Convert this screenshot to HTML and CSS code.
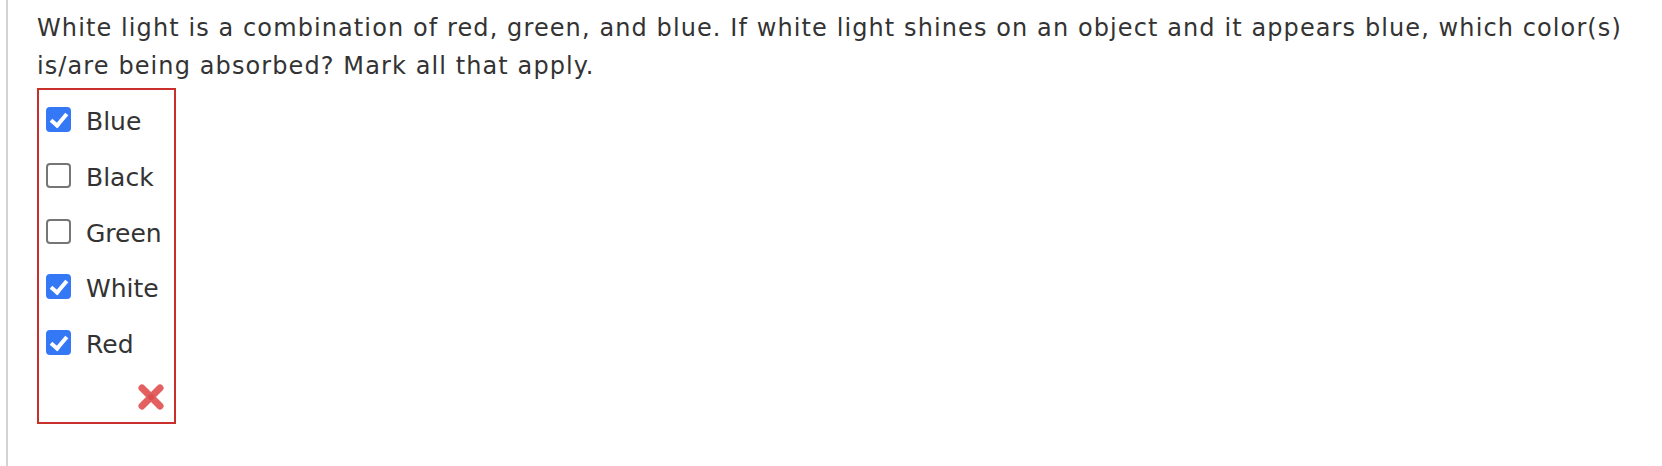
FILE: index.html
```html
<!DOCTYPE html>
<html lang="en">
<head>
    <meta charset="UTF-8">
    <meta name="viewport" content="width=device-width, initial-scale=1.0">
    <title>Question</title>
    <link rel="stylesheet" href="styles.css">
</head>
<body>
    <div class="question-wrap">
        <p class="question-text">White light is a combination of red, green, and blue. If white light shines on an object and it appears blue, which color(s) is/are being absorbed? Mark all that apply.</p>
        <div class="answer-box">
            <label class="option"><input type="checkbox" checked disabled /><span>Blue</span></label>
            <label class="option"><input type="checkbox" disabled /><span>Black</span></label>
            <label class="option"><input type="checkbox" disabled /><span>Green</span></label>
            <label class="option"><input type="checkbox" checked disabled /><span>White</span></label>
            <label class="option"><input type="checkbox" checked disabled /><span>Red</span></label>
            <div class="result-mark">
                <svg width="28" height="28" viewBox="0 0 28 28">
                    <g stroke="#e46060" stroke-width="7" stroke-linecap="round">
                        <line x1="5" y1="5" x2="23" y2="23" />
                        <line x1="23" y1="5" x2="5" y2="23" />
                    </g>
                    <circle cx="14" cy="14" r="3" fill="#d94f4f" />
                </svg>
            </div>
        </div>
    </div>
</body>
</html>
```

FILE: styles.css
```css
body {
    margin: 0;
    padding: 0;
    background-color: #fff;
    color: #333;
    font-family: "DejaVu Sans", Verdana, sans-serif;
}

.question-wrap {
    margin-left: 6px;
    min-height: 100vh;
    box-sizing: border-box;
    border-left: 2px solid #d3d3d3;
    padding: 9px 0 0 29px;
}

.question-text {
    margin: 0;
    width: 1610px;
    font-size: 24px;
    line-height: 38.4px;
    letter-spacing: 1.1px;
}

.answer-box {
    display: inline-block;
    box-sizing: border-box;
    width: 139px;
    height: 336px;
    margin-top: 2px;
    padding: 2px 0 0 7px;
    border: 2px solid #c9302c;
}

.option {
    display: flex;
    align-items: center;
    height: 55.75px;
    font-size: 25px;
}

.option span {
    margin-top: 4px;
}

.option input {
    appearance: none;
    -webkit-appearance: none;
    position: relative;
    box-sizing: border-box;
    width: 25px;
    height: 25px;
    margin: 0 15px 0 0;
    border: 2px solid #767676;
    border-radius: 4px;
    background-color: #fff;
    opacity: 1;
}

.option input:checked {
    background-color: #3478f6;
    border-color: #3478f6;
}

.option input:checked::after {
    content: "";
    position: absolute;
    left: 6px;
    top: 1px;
    width: 6px;
    height: 13px;
    border-right: 4px solid #fff;
    border-bottom: 4px solid #fff;
    transform: rotate(40deg);
}

.result-mark {
    display: flex;
    justify-content: flex-end;
    padding: 12px 9px 0 0;
}

.result-mark svg {
    display: block;
}
```
